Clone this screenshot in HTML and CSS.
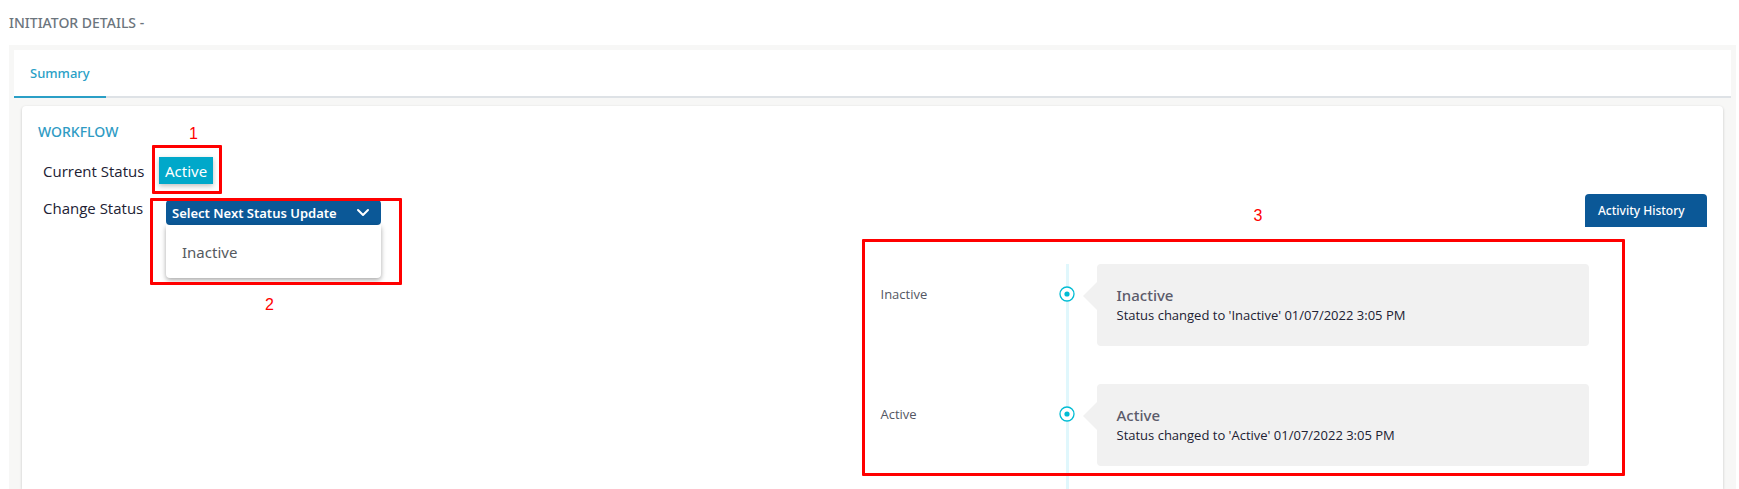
FILE: index.html
```html
<!DOCTYPE html>
<html lang="en">
<head>
<meta charset="utf-8">
<meta name="viewport" content="width=device-width, initial-scale=1">
<title>Initiator Details</title>
<link rel="stylesheet" href="styles.css">
</head>
<body>
<h1 class="page-title">INITIATOR DETAILS -</h1>
<main class="panel">
  <nav class="tabs">
    <a class="tab tab-active" href="#summary" aria-current="page">Summary</a>
  </nav>
  <section class="card" id="summary">
    <div class="workflow">
      <h2 class="section-title">WORKFLOW</h2>
      <div class="field">
        <span class="field-label">Current Status</span>
        <div class="marked">
          <span class="badge">Active</span>
          <span class="mark mark-status"></span>
          <span class="mark-number number-status">1</span>
        </div>
      </div>
      <div class="field field-change">
        <span class="field-label" id="change-label">Change Status</span>
        <div class="marked dropdown">
          <button class="dropdown-toggle" type="button" aria-haspopup="menu" aria-expanded="true">
            Select Next Status Update
            <svg class="chevron" viewBox="0 0 14 9" aria-hidden="true"><path d="M2 2l5 5 5-5"/></svg>
          </button>
          <div class="dropdown-menu" role="menu" aria-labelledby="change-label">
            <button class="dropdown-item" type="button" role="menuitem">Inactive</button>
          </div>
          <span class="mark mark-change"></span>
          <span class="mark-number number-change">2</span>
        </div>
      </div>
    </div>
    <div class="activity">
      <button class="history-button" type="button">Activity History</button>
      <div class="marked timeline-area">
        <ol class="timeline">
          <li class="entry">
            <span class="entry-label">Inactive</span>
            <span class="entry-line"><svg class="dot" viewBox="0 0 16 16" aria-hidden="true"><circle class="dot-ring" cx="8" cy="8" r="7"/><circle class="dot-core" cx="8" cy="8" r="2.6"/></svg></span>
            <div class="bubble">
              <h3 class="bubble-title">Inactive</h3>
              <p class="bubble-text">Status changed to 'Inactive' 01/07/2022 3:05 PM</p>
            </div>
          </li>
          <li class="entry">
            <span class="entry-label">Active</span>
            <span class="entry-line"><svg class="dot" viewBox="0 0 16 16" aria-hidden="true"><circle class="dot-ring" cx="8" cy="8" r="7"/><circle class="dot-core" cx="8" cy="8" r="2.6"/></svg></span>
            <div class="bubble">
              <h3 class="bubble-title">Active</h3>
              <p class="bubble-text">Status changed to 'Active' 01/07/2022 3:05 PM</p>
            </div>
          </li>
        </ol>
        <span class="mark mark-timeline"></span>
        <span class="mark-number number-timeline">3</span>
      </div>
    </div>
  </section>
</main>
</body>
</html>
```
FILE: styles.css
```css
*, *::before, *::after { box-sizing: border-box; }

body {
  margin: 0;
  min-height: 100vh;
  display: flex;
  flex-direction: column;
  background: #fff;
  color: #212133;
  font-family: "Noto Sans", "Open Sans", sans-serif;
  font-size: 15px;
  line-height: 20px;
}

h1, h2, h3, p, ol { margin: 0; padding: 0; }
button { font-family: inherit; border: 0; margin: 0; cursor: pointer; }

.page-title {
  padding: 13px 9px 12px;
  color: #6c757d;
  font-size: 14px;
  font-weight: 500;
}

.panel {
  flex: 1;
  display: flex;
  flex-direction: column;
  margin: 0 3px 0 9px;
  padding: 5px 5px 0;
  background: #f7f7f6;
}

.tabs {
  display: flex;
  background: #fff;
  box-shadow: inset 0 -2px #dee2e6;
}
.tab {
  padding: 13px 16px;
  border-bottom: 2px solid #2a9fc6;
  color: #2a9fc6;
  font-size: 13px;
  font-weight: 500;
  text-decoration: none;
}

.card {
  flex: 1;
  display: grid;
  grid-template-columns: 1fr 1fr;
  margin: 8px 8px 0;
  background: #fff;
  border-radius: 4px 4px 0 0;
  box-shadow: 0 1px 3px rgba(0, 0, 0, .2);
}

.workflow { padding: 16px; }
.section-title {
  color: #2f9bc4;
  font-size: 14px;
  font-weight: 500;
}
.field {
  display: flex;
  align-items: center;
  gap: 16px;
  margin-top: 15px;
  padding-left: 5px;
}
.field-change {
  align-items: flex-start;
  gap: 23px;
  margin-top: 14px;
}
.field-label {
  width: 100px;
  font-family: "Open Sans", sans-serif;
  white-space: nowrap;
}

.badge {
  display: block;
  padding: 4px 6px 3px;
  background: #00a8ca;
  color: #fff;
  box-shadow: 0 2px 5px rgba(0, 0, 0, .25);
}

.dropdown { width: 215px; margin-top: 2px; }
.dropdown-toggle {
  display: flex;
  align-items: center;
  justify-content: space-between;
  width: 100%;
  height: 25px;
  padding: 0 11px 0 6px;
  border-radius: 4px;
  background: #0b5897;
  color: #fff;
  font-size: 13px;
  font-weight: 600;
  white-space: nowrap;
}
.chevron {
  width: 14px;
  height: 9px;
  fill: none;
  stroke: #fff;
  stroke-width: 2;
  stroke-linecap: round;
  stroke-linejoin: round;
}
.dropdown-menu {
  position: absolute;
  top: 100%;
  left: 0;
  right: 0;
  padding: 10px 0;
  background: #fff;
  border-radius: 0 0 4px 4px;
  box-shadow: 0 2px 5px rgba(0, 0, 0, .35);
}
.dropdown-item {
  width: 100%;
  padding: 7px 16px 6px;
  background: none;
  color: #555a60;
  font-size: 15px;
  line-height: 20px;
  text-align: left;
}

.activity {
  display: flex;
  flex-direction: column;
  padding: 88px 16px 0 0;
}
.history-button {
  align-self: flex-end;
  width: 122px;
  height: 33px;
  padding: 0 13px;
  border-radius: 4px 4px 0 0;
  background: #0b5897;
  color: #fff;
  font-size: 12px;
  font-weight: 500;
  line-height: 20px;
  text-align: left;
  white-space: nowrap;
}

.timeline-area { margin: 37px 118px 0 8px; }
.timeline { list-style: none; }
.entry {
  display: grid;
  grid-template-columns: 185px 3px 1fr;
}
.entry-label {
  padding-top: 20px;
  color: #545763;
  font-family: "Open Sans", sans-serif;
  font-size: 13px;
}
.entry-line {
  display: flex;
  justify-content: center;
  background: #e0f7fc;
}
.dot { flex: none; width: 16px; height: 16px; margin-top: 22px; }
.dot-ring { fill: #fff; stroke: #00bcd4; stroke-width: 1.3; }
.dot-core { fill: #00bcd4; }

.bubble {
  position: relative;
  min-height: 82px;
  margin: 0 0 38px 28px;
  padding: 21px 20px 20px;
  background: #f1f1f1;
  border-radius: 4px;
}
.entry:last-child .bubble { margin-bottom: 23px; }
.bubble::before {
  content: "";
  position: absolute;
  top: 18px;
  right: 100%;
  border: 14px solid transparent;
  border-left: 0;
  border-right-color: #f1f1f1;
}
.bubble-title { color: #5b5b6b; font-size: 15px; font-weight: 500; }
.bubble-text { font-family: "Open Sans", sans-serif; font-size: 13px; }

/* Numbered callouts around parts of the page */
.marked { position: relative; }
.mark {
  position: absolute;
  border: 3px solid #f00;
  border-radius: 1px;
  pointer-events: none;
}
.mark-number {
  position: absolute;
  color: #f00;
  font-family: "Liberation Sans", Arial, sans-serif;
  font-size: 16px;
  line-height: 20px;
}
.mark-status { inset: -12px -9px -10px -7px; }
.number-status { top: -33px; left: 30px; }
.mark-change { inset: -2px -21px -60px -16px; }
.number-change { top: 95px; left: 99px; }
.mark-timeline { inset: -25px -36px 13px -19px; }
.number-timeline { top: -58px; left: 373px; }
```
